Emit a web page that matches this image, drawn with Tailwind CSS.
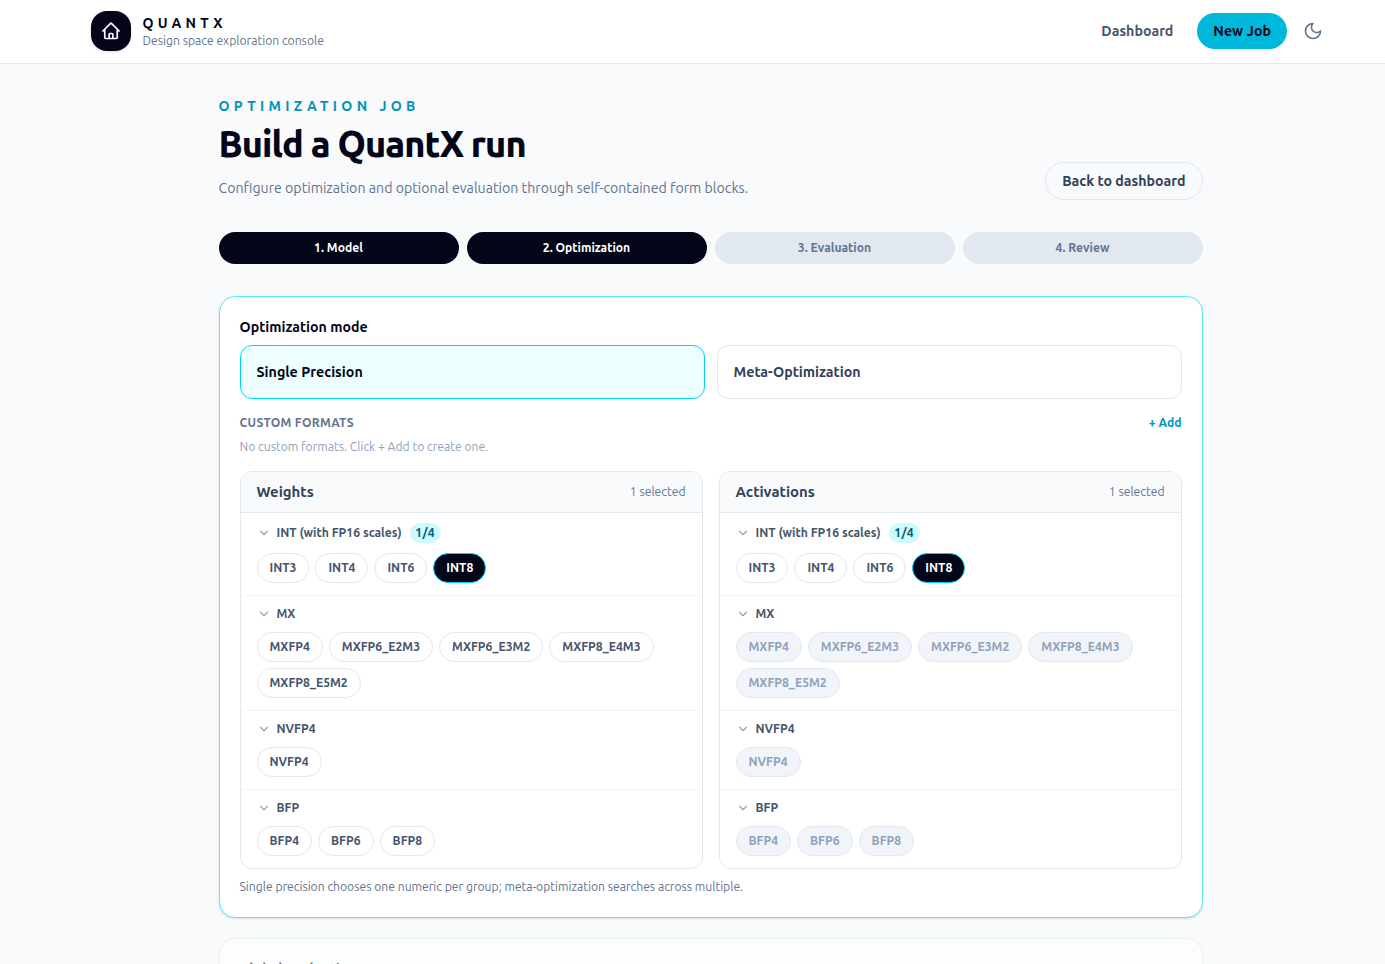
<!DOCTYPE html>
<html lang="en">
<head>
    <meta charset="UTF-8">
    <title>QuantX - New Job</title>
    <script src="https://cdn.jsdelivr.net/npm/@tailwindcss/browser@4"></script>
</head>
<body class="bg-slate-50 text-slate-950 font-['Ubuntu','Noto_Sans',sans-serif]">
<div class="h-[964px] overflow-hidden">
    <header class="h-16 pb-px bg-white border-b border-slate-200 pl-[90.5px] pr-[62px] flex items-center justify-between">
        <div class="flex items-center gap-3">
            <div class="w-10 h-10 rounded-2xl bg-slate-950 flex items-center justify-center shadow-sm">
                <svg class="w-5 h-5 text-white" viewBox="0 0 24 24" fill="none" stroke="currentColor" stroke-width="2" stroke-linecap="round" stroke-linejoin="round">
                    <path d="M2.25 12l8.954-8.955c.44-.439 1.152-.439 1.591 0L21.75 12M4.5 9.75v10.125c0 .621.504 1.125 1.125 1.125H9.75v-4.875c0-.621.504-1.125 1.125-1.125h2.25c.621 0 1.125.504 1.125 1.125V21h4.125c.621 0 1.125-.504 1.125-1.125V9.75M8.25 21h8.25"/>
                </svg>
            </div>
            <div>
                <div class="text-sm font-bold tracking-[0.3em] leading-5">QUANTX</div>
                <div class="text-[12.15px] text-slate-500 leading-4">Design space exploration console</div>
            </div>
        </div>
        <nav class="flex items-center">
            <a class="text-[14.2px] leading-5 font-semibold text-slate-600">Dashboard</a>
            <button class="ml-6 h-9 px-4 rounded-full bg-cyan-500 text-[14.2px] leading-5 font-semibold text-slate-950">New Job</button>
            <svg class="ml-4 w-5 h-5 text-slate-500" viewBox="0 0 24 24" fill="none" stroke="currentColor" stroke-width="2" stroke-linecap="round" stroke-linejoin="round">
                <path d="M12 3a6 6 0 0 0 9 9 9 9 0 1 1-9-9Z"/>
            </svg>
        </nav>
    </header>

    <main class="ml-[218.5px] w-[984px] pt-8">
        <div class="flex items-end justify-between">
            <div>
                <p class="text-sm font-bold tracking-[0.31em] text-cyan-600 leading-5">OPTIMIZATION JOB</p>
                <h1 class="mt-2 text-4xl font-extrabold tracking-tight leading-10">Build a QuantX run</h1>
                <p class="mt-[14px] text-[14.18px] text-slate-500 leading-5 pb-0.5">Configure optimization and optional evaluation through self-contained form blocks.</p>
            </div>
            <button class="h-[38px] px-4 rounded-full border border-slate-200 text-[14.2px] leading-5 font-semibold text-slate-700">Back to dashboard</button>
        </div>

        <div class="mt-8 grid grid-cols-4 gap-2">
            <div class="h-8 rounded-full bg-slate-950 text-white text-[12.15px] leading-4 font-semibold flex items-center justify-center">1. Model</div>
            <div class="h-8 rounded-full bg-slate-950 text-white text-[12.15px] leading-4 font-semibold flex items-center justify-center">2. Optimization</div>
            <div class="h-8 rounded-full bg-slate-200 text-slate-500 text-[12.15px] leading-4 font-semibold flex items-center justify-center">3. Evaluation</div>
            <div class="h-8 rounded-full bg-slate-200 text-slate-500 text-[12.15px] leading-4 font-semibold flex items-center justify-center">4. Review</div>
        </div>

        <section class="mt-8 h-[622px] bg-white border border-cyan-300 rounded-2xl px-5 pt-5 shadow-sm">
            <h2 class="text-[14.2px] font-semibold leading-5">Optimization mode</h2>
            <div class="mt-2 grid grid-cols-2 gap-3">
                <div class="h-[54px] px-4 rounded-xl border border-cyan-400 bg-cyan-50 text-[14.25px] leading-5 font-semibold flex items-center">Single Precision</div>
                <div class="h-[54px] px-4 rounded-xl border border-slate-200 text-[14.25px] leading-5 font-semibold text-slate-700 flex items-center">Meta-Optimization</div>
            </div>
            <div class="mt-4 flex items-center justify-between">
                <span class="text-[12.15px] leading-4 font-semibold text-slate-500 tracking-wide">CUSTOM FORMATS</span>
                <span class="text-[12.15px] leading-4 font-semibold text-cyan-600">+ Add</span>
            </div>
            <p class="mt-2 text-[12.15px] leading-4 text-slate-400">No custom formats. Click + Add to create one.</p>
            <div id="panels" class="mt-4 grid grid-cols-2 gap-4"></div>
            <p class="mt-2.5 text-[12.15px] leading-4 text-slate-500">Single precision chooses one numeric per group; meta-optimization searches across multiple.</p>
        </section>

        <section class="mt-5 h-24 bg-white border border-slate-200 rounded-2xl px-5 pt-5 opacity-60">
            <h2 class="text-[14.2px] font-semibold leading-5">Global evaluation</h2>
        </section>
    </main>
</div>

<script>
    const groups = [
        { name: 'INT (with FP16 scales)', badge: '1/4', chips: ['INT3', 'INT4', 'INT6', 'INT8'] },
        { name: 'MX', chips: ['MXFP4', 'MXFP6_E2M3', 'MXFP6_E3M2', 'MXFP8_E4M3', 'MXFP8_E5M2'], locks: true },
        { name: 'NVFP4', chips: ['NVFP4'], locks: true },
        { name: 'BFP', chips: ['BFP4', 'BFP6', 'BFP8'], locks: true }
    ];
    const chipBase = 'h-[30px] px-3 rounded-full text-[12.2px] leading-4 font-semibold flex items-center border ';
    const chipOn = chipBase + 'bg-slate-950 text-white border-cyan-400';
    const chipOff = chipBase + 'border-slate-200 text-slate-600';
    const chipLocked = chipBase + 'bg-slate-100 border-slate-200 text-slate-400';
    const chevron = '<svg class="w-3.5 h-3.5 text-slate-400" viewBox="0 0 24 24" fill="none" stroke="currentColor" stroke-width="2" stroke-linecap="round" stroke-linejoin="round"><path d="m6 9 6 6 6-6"/></svg>';

    function panel(title, lockOthers) {
        const rows = groups.map((g, i) => {
            const chips = g.chips.map(c => {
                const cls = c === 'INT8' ? chipOn : (g.locks && lockOthers ? chipLocked : chipOff);
                return `<span class="${cls}">${c}</span>`;
            }).join('');
            const badge = g.badge ? `<span class="ml-0.5 h-5 w-[31px] rounded-full bg-cyan-100 text-cyan-800 text-[12.2px] leading-4 font-semibold tracking-wide flex items-center justify-center">${g.badge}</span>` : '';
            return `<div class="${i ? 'border-t border-slate-100' : ''} px-4 pt-2 pb-3">
                <div class="flex items-center gap-1.5 text-[12.2px] leading-4 font-semibold text-slate-600 ${g.badge ? 'h-6' : 'h-5'}">${chevron}<span>${g.name}</span>${badge}</div>
                <div class="mt-2 flex flex-wrap gap-1.5">${chips}</div>
            </div>`;
        }).join('');
        return `<div class="h-[398px] border border-slate-200 rounded-xl overflow-hidden">
            <div class="h-[41px] px-4 bg-slate-50 border-b border-slate-200 flex items-center justify-between">
                <span class="text-[14.9px] leading-5 font-semibold text-slate-700">${title}</span>
                <span class="text-[12.15px] leading-4 text-slate-500">1 selected</span>
            </div>${rows}</div>`;
    }

    document.getElementById('panels').innerHTML = panel('Weights', false) + panel('Activations', true);
</script>
</body>
</html>
